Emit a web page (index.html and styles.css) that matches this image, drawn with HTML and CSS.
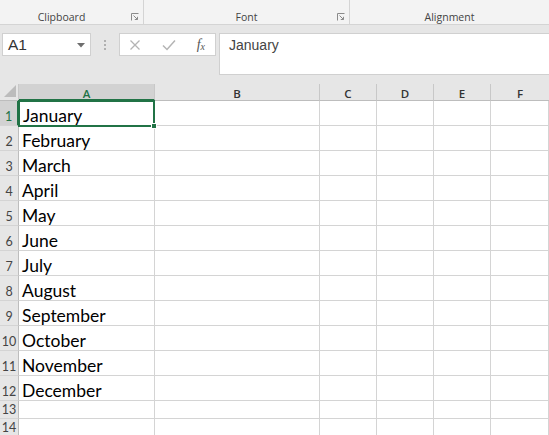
FILE: index.html
```html
<!DOCTYPE html>
<html>
<head>
<meta charset="utf-8">
<link rel="stylesheet" href="styles.css">
</head>
<body>
<div class="app">
  <div class="ribbon">
    <div class="group g-clip"><span class="glabel">Clipboard</span>
      <svg class="launcher" width="8" height="8" viewBox="0 0 8 8"><path d="M0.5 7.5V0.5H7.5" fill="none" stroke="#8a8a8a" stroke-width="1"/><path d="M2.5 2.5L6.5 6.5M3.8 6.5H6.5V3.8" fill="none" stroke="#8a8a8a" stroke-width="1"/></svg>
    </div>
    <div class="group g-font"><span class="glabel">Font</span>
      <svg class="launcher" width="8" height="8" viewBox="0 0 8 8"><path d="M0.5 7.5V0.5H7.5" fill="none" stroke="#8a8a8a" stroke-width="1"/><path d="M2.5 2.5L6.5 6.5M3.8 6.5H6.5V3.8" fill="none" stroke="#8a8a8a" stroke-width="1"/></svg>
    </div>
    <div class="group g-align"><span class="glabel">Alignment</span></div>
  </div>
  <div class="formula-row">
    <div class="namebox"><span class="ref">A1</span>
      <svg class="dd" width="8" height="5" viewBox="0 0 8 5"><path d="M0 0H8L4 4.5Z" fill="#6e6e6e"/></svg>
    </div>
    <div class="dots"><i></i><i></i><i></i></div>
    <div class="fxbox">
      <svg class="ico" width="12" height="12" viewBox="0 0 12 12"><path d="M1.5 1.5L10.5 10.5M10.5 1.5L1.5 10.5" stroke="#b4b4b4" stroke-width="1.3" fill="none"/></svg>
      <svg class="ico" width="14" height="12" viewBox="0 0 14 12"><path d="M1 6.5L5 10.5L13 1.5" stroke="#b4b4b4" stroke-width="1.5" fill="none"/></svg>
      <span class="fx">f<sub>x</sub></span>
    </div>
    <div class="finput">January</div>
  </div>
  <div class="sheet">
    <div class="corner"><svg width="12" height="12" viewBox="0 0 12 12"><path d="M12 0V12H0Z" fill="#bcbcbc"/></svg></div>
    <div class="ch sel">A</div>
    <div class="ch">B</div>
    <div class="ch">C</div>
    <div class="ch">D</div>
    <div class="ch">E</div>
    <div class="ch last">F</div>

    <div class="rh sel">1</div><div class="c a1">January<span class="handle"></span></div><div class="c"></div><div class="c"></div><div class="c"></div><div class="c"></div><div class="c"></div>
    <div class="rh">2</div><div class="c">February</div><div class="c"></div><div class="c"></div><div class="c"></div><div class="c"></div><div class="c"></div>
    <div class="rh">3</div><div class="c">March</div><div class="c"></div><div class="c"></div><div class="c"></div><div class="c"></div><div class="c"></div>
    <div class="rh">4</div><div class="c">April</div><div class="c"></div><div class="c"></div><div class="c"></div><div class="c"></div><div class="c"></div>
    <div class="rh">5</div><div class="c">May</div><div class="c"></div><div class="c"></div><div class="c"></div><div class="c"></div><div class="c"></div>
    <div class="rh">6</div><div class="c">June</div><div class="c"></div><div class="c"></div><div class="c"></div><div class="c"></div><div class="c"></div>
    <div class="rh">7</div><div class="c">July</div><div class="c"></div><div class="c"></div><div class="c"></div><div class="c"></div><div class="c"></div>
    <div class="rh">8</div><div class="c">August</div><div class="c"></div><div class="c"></div><div class="c"></div><div class="c"></div><div class="c"></div>
    <div class="rh">9</div><div class="c">September</div><div class="c"></div><div class="c"></div><div class="c"></div><div class="c"></div><div class="c"></div>
    <div class="rh">10</div><div class="c">October</div><div class="c"></div><div class="c"></div><div class="c"></div><div class="c"></div><div class="c"></div>
    <div class="rh">11</div><div class="c">November</div><div class="c"></div><div class="c"></div><div class="c"></div><div class="c"></div><div class="c"></div>
    <div class="rh">12</div><div class="c">December</div><div class="c"></div><div class="c"></div><div class="c"></div><div class="c"></div><div class="c"></div>
    <div class="rh">13</div><div class="c"></div><div class="c"></div><div class="c"></div><div class="c"></div><div class="c"></div><div class="c"></div>
    <div class="rh">14</div><div class="c"></div><div class="c"></div><div class="c"></div><div class="c"></div><div class="c"></div><div class="c"></div>
  </div>
</div>
</body>
</html>
```
FILE: styles.css
```css
* { box-sizing: border-box; }
html, body { margin: 0; padding: 0; }
body { width: 549px; height: 435px; overflow: hidden; background: #fff; font-family: "Open Sans", "Liberation Sans", sans-serif; }
.app { width: 549px; height: 435px; background: #e6e6e6; }

.ribbon { height: 25px; display: flex; background: #f3f3f3; border-bottom: 1px solid #d4d4d4; }
.group { position: relative; height: 24px; display: flex; align-items: flex-end; justify-content: center; padding-bottom: 0; border-right: 1px solid #d4d4d4; }
.g-clip { width: 144px; }
.g-font { width: 206px; }
.g-align { flex: 1; border-right: none; }
.glabel { font-size: 10.5px; color: #444; line-height: 14px; }
.g-clip .glabel { margin-left: -20px; }
.launcher { position: absolute; right: 4px; bottom: 3px; }

.formula-row { display: flex; align-items: flex-start; padding: 8px 0 0 2px; height: 59px; }
.namebox { width: 89px; height: 23px; background: #fff; border: 1px solid #d0d0d0; display: flex; align-items: center; justify-content: space-between; padding: 0 5px 0 5px; }
.ref { font-family: "Liberation Sans", sans-serif; font-size: 15.5px; color: #333; }
.dd { margin-top: 1px; }
.dots { width: 28px; height: 23px; display: flex; flex-direction: column; align-items: center; justify-content: center; gap: 2px; }
.dots i { width: 2px; height: 2px; background: #b0b0b0; display: block; }
.fxbox { width: 97px; height: 23px; background: #fff; border: 1px solid #d0d0d0; display: flex; align-items: center; justify-content: space-between; padding: 0 10px 0 9px; }
.fx { font-family: "Liberation Serif", serif; font-style: italic; font-size: 14px; color: #555; line-height: 1; }
.fx sub { font-size: 10px; vertical-align: -1px; }
.finput { margin-left: 3px; flex: 1; height: 42px; background: #fff; border: 1px solid #d0d0d0; border-right: none; font-family: "Liberation Sans", sans-serif; font-size: 14px; color: #444; padding: 3px 0 0 9px; }

.sheet { display: grid; grid-template-columns: 19px 136px 165px 57px 57px 57px 58px; grid-template-rows: 17px repeat(12, 25px) 18px 18px; background: #fff; }
.corner { background: #e6e6e6; border-right: 1px solid #c8c8c8; border-bottom: 1px solid #bdbdbd; display: flex; align-items: flex-end; justify-content: flex-end; padding: 0 2px 3px 0; }
.ch { background: #e6e6e6; border-right: 1px solid #c8c8c8; border-bottom: 1px solid #bdbdbd; font-family: "Open Sans", sans-serif; font-size: 11.5px; font-weight: 600; color: #333; display: flex; align-items: center; justify-content: center; line-height: 1; padding-top: 3px; }
.ch.last { border-right: none; }
.ch.sel { background: #d2d2d2; color: #217346; border-bottom: 2px solid #217346; font-weight: 600; padding-top: 4px; }
.rh { background: #e6e6e6; border-right: 1px solid #bdbdbd; border-bottom: 1px solid #d4d4d4; font-family: "Lato", sans-serif; font-size: 12.5px; color: #444; display: flex; align-items: flex-end; justify-content: center; padding-bottom: 2px; line-height: 1; }
.rh.sel { background: #d2d2d2; color: #217346; border-right: 2px solid #217346; }
.c { border-right: 1px solid #d4d4d4; border-bottom: 1px solid #d4d4d4; font-family: "Lato", sans-serif; font-size: 17.5px; color: #000; display: flex; align-items: flex-end; padding: 0 0 0 3px; line-height: 19px; white-space: nowrap; }
.a1 { position: relative; border: 2px solid #217346; margin: -1px 0 -1px -1px; padding-left: 3px; }
.handle { position: absolute; right: -4px; bottom: -4px; width: 6px; height: 6px; background: #217346; border: 1px solid #fff; }
```
